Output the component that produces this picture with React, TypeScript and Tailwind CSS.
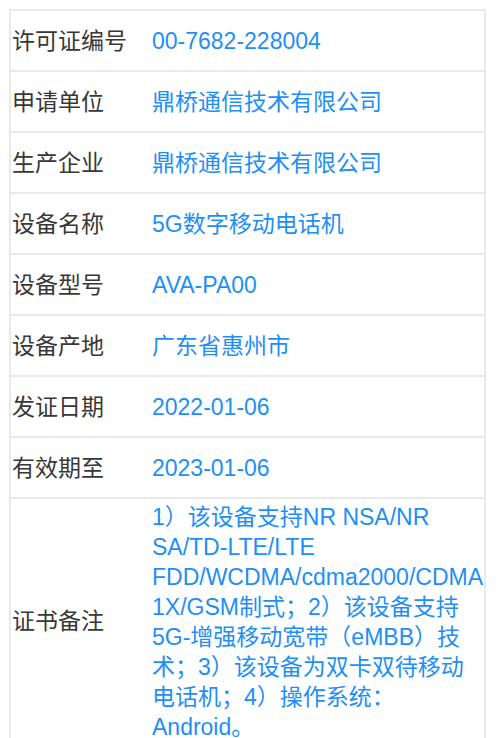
const rows: [string, string][] = [
  ["许可证编号", "00-7682-228004"],
  ["申请单位", "鼎桥通信技术有限公司"],
  ["生产企业", "鼎桥通信技术有限公司"],
  ["设备名称", "5G数字移动电话机"],
  ["设备型号", "AVA-PA00"],
  ["设备产地", "广东省惠州市"],
  ["发证日期", "2022-01-06"],
  ["有效期至", "2023-01-06"],
];

// remarks are broken by hand so the lines match the certificate page
const remarks = [
  "1）该设备支持NR NSA/NR",
  "SA/TD-LTE/LTE",
  "FDD/WCDMA/cdma2000/CDMA",
  "1X/GSM制式；2）该设备支持",
  "5G-增强移动宽带（eMBB）技",
  "术；3）该设备为双卡双待移动",
  "电话机；4）操作系统：",
  "Android。",
];

export default function App() {
  return (
    <div className="min-h-screen bg-white pl-[9px] pt-[9px] font-['Liberation_Sans','Noto_Sans_CJK_SC',sans-serif] text-[23px] leading-[30px]">
      <div className="w-[477px] border-2 border-b-0 border-[#e9e9e9]">
        {rows.map(([label, value]) => (
          <Row key={label} label={label}>
            <div className="flex h-[59px] items-center">{value}</div>
          </Row>
        ))}
        <Row label="证书备注" last>
          <div className="whitespace-nowrap pt-[3px]">
            {remarks.map((line) => (
              <div key={line}>{line}</div>
            ))}
          </div>
        </Row>
      </div>
    </div>
  );
}

function Row({
  label,
  last,
  children,
}: {
  label: string;
  last?: boolean;
  children: React.ReactNode;
}) {
  return (
    <div className={last ? "flex items-center" : "flex items-center border-b-2 border-[#e9e9e9]"}>
      <div className="w-[140px] shrink-0 pl-px text-[#383838]">{label}</div>
      <div className="min-w-0 flex-1 pl-px text-[#1e8ff5]">{children}</div>
    </div>
  );
}
